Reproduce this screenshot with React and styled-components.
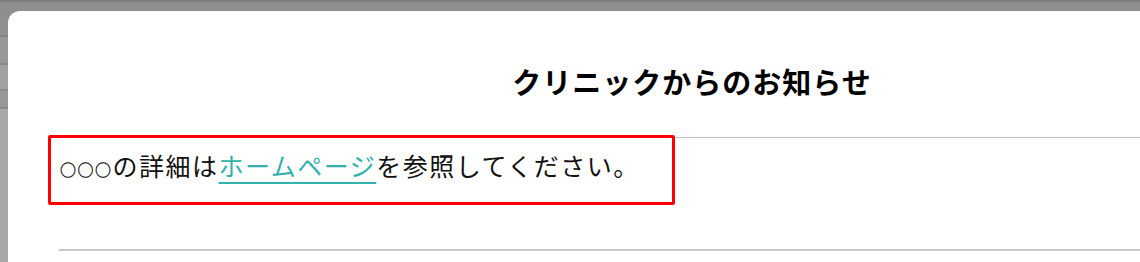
import React from "react";
import styled, { createGlobalStyle } from "styled-components";

const GlobalStyle = createGlobalStyle`
  html, body {
    margin: 0;
    padding: 0;
    background: #8e8e8e;
    overflow: hidden;
  }
  body {
    font-family: "Noto Sans CJK JP", "Noto Sans", sans-serif;
  }
`;

const Page = styled.div`
  display: flex;
  height: 262px;
  border-top: 2px solid #7a7a7a;
  padding-top: 9px;
  box-sizing: border-box;
  background: #8e8e8e;
  overflow: hidden;
`;

const Backdrop = styled.div`
  width: 8px;
  flex-shrink: 0;
  display: flex;
  flex-direction: column;
`;

const Band = styled.div`
  height: ${({ h }) => (h ? `${h}px` : "auto")};
  flex: ${({ h }) => (h ? "none" : 1)};
  background: ${({ color }) => color};
  border-bottom: ${({ line }) => (line ? `2px solid ${line}` : "none")};
`;

const Modal = styled.div`
  width: 1368px;
  flex-shrink: 0;
  background: #ffffff;
  border-radius: 12px 12px 0 0;
  padding: 0 51px;
  box-sizing: border-box;
  display: flex;
  flex-direction: column;
`;

const Header = styled.div`
  height: 127px;
  box-sizing: border-box;
  padding-top: 52px;
  border-bottom: 1px solid #c2c2c2;
  display: flex;
  justify-content: center;
`;

const Title = styled.h2`
  margin: 0;
  font-size: 29px;
  line-height: 36px;
  font-weight: 700;
  letter-spacing: 1px;
  color: #000;
`;

const Highlight = styled.div`
  width: 627px;
  height: 70px;
  box-sizing: border-box;
  margin: -3px 0 0 -11px;
  border: 3px solid #ff0000;
  border-radius: 2px;
  padding: 9px 0 0 9px;
`;

const Message = styled.p`
  margin: 0;
  font-size: 25px;
  line-height: 36px;
  letter-spacing: 1.5px;
  color: #111;
  white-space: nowrap;
`;

const Marks = styled.span`
  font-size: 16px;
  letter-spacing: 1.5px;
  color: #000;
  -webkit-text-stroke: 0.3px #000;
`;

const HomeLink = styled.a`
  color: #31b2aa;
  text-decoration: underline;
  text-decoration-thickness: 1.5px;
  text-underline-offset: 6px;
`;

const Footer = styled.div`
  margin-top: 44px;
  border-top: 2px solid #c8c8c8;
  flex: 1;
`;

const App = () => {
  return (
    <>
      <GlobalStyle />
      <Page>
        <Backdrop>
          <Band h={24} color="#8f8f8f" line="#838383" />
          <Band h={26} color="#979797" line="#8a8a8a" />
          <Band h={24} color="#a1a1a1" line="#8c8c8c" />
          <Band h={16} color="#979797" line="#888888" />
          <Band color="#a8a8a8" />
        </Backdrop>
        <Modal>
          <Header>
            <Title>クリニックからのお知らせ</Title>
          </Header>
          <Highlight>
            <Message>
              <Marks>○○○</Marks>の詳細は
              <HomeLink href="#">ホームページ</HomeLink>
              を参照してください。
            </Message>
          </Highlight>
          <Footer />
        </Modal>
      </Page>
    </>
  );
};

export default App;
